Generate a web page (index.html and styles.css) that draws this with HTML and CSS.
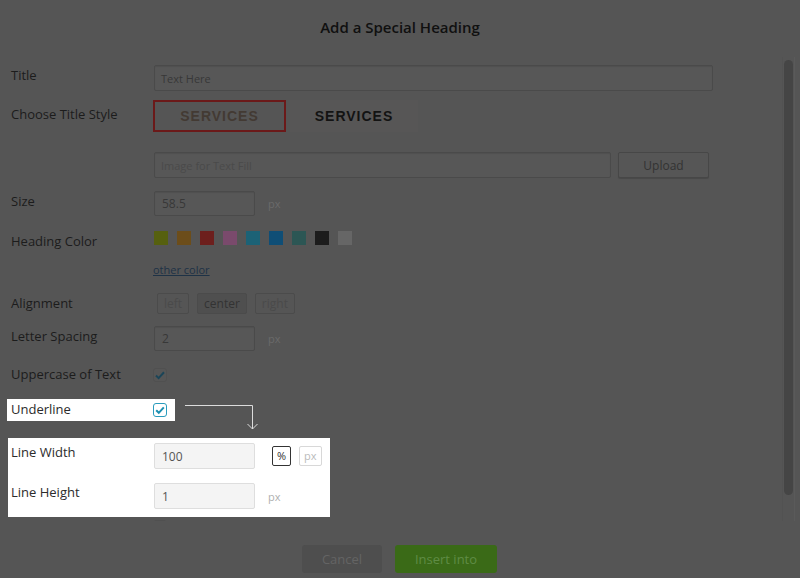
FILE: index.html
```html
<!DOCTYPE html>
<html>
<head>
<meta charset="utf-8">
<link rel="stylesheet" href="styles.css">
</head>
<body>
<div class="dialog">
  <div class="header"><h1 class="title">Add a Special Heading</h1></div>
  <div class="body">
    <div class="row r-title">
      <div class="label up">Title</div>
      <div class="input wide">Text Here</div>
    </div>
    <div class="row r-style">
      <div class="label up1">Choose Title Style</div>
      <div class="style-box selected"><span class="svc fill">SERVICES</span></div>
      <div class="style-box plain"><span class="svc">SERVICES</span></div>
    </div>
    <div class="row r-image">
      <div class="label"></div>
      <div class="input image placeholder">Image for Text Fill</div>
      <div class="btn upload">Upload</div>
    </div>
    <div class="row r-size">
      <div class="label up">Size</div>
      <div class="input small">58.5</div>
      <span class="unit">px</span>
    </div>
    <div class="row r-color">
      <div class="label down">Heading Color</div>
      <div class="swatches">
        <span class="sw" style="background:#56600f"></span>
        <span class="sw" style="background:#6c4d1a"></span>
        <span class="sw" style="background:#6d1f1d"></span>
        <span class="sw" style="background:#7a4a6c"></span>
        <span class="sw" style="background:#1c6276"></span>
        <span class="sw" style="background:#0f4e76"></span>
        <span class="sw" style="background:#2c5654"></span>
        <span class="sw" style="background:#1c1c1c"></span>
        <span class="sw" style="background:#666666"></span>
      </div>
    </div>
    <div class="row r-other">
      <div class="label"></div>
      <a class="link">other color</a>
    </div>
    <div class="row r-align">
      <div class="label up2">Alignment</div>
      <div class="aligns">
        <span class="abtn">left</span>
        <span class="abtn active">center</span>
        <span class="abtn">right</span>
      </div>
    </div>
    <div class="row r-letter">
      <div class="label up">Letter Spacing</div>
      <div class="input small">2</div>
      <span class="unit">px</span>
    </div>
    <div class="row r-upper">
      <div class="label up2">Uppercase of Text</div>
      <span class="check dim">
        <svg width="14" height="14" viewBox="0 0 14 14"><path d="M3 7.5l2.6 2.6L11 4.2" fill="none" stroke="#1b4558" stroke-width="2"/></svg>
      </span>
    </div>
    <div class="row r-under hl">
      <div class="label up2">Underline</div>
      <span class="check on">
        <svg width="14" height="14" viewBox="0 0 14 14"><path d="M3.2 7.2l2.6 2.6L10.8 4.3" fill="none" stroke="#1c8fb1" stroke-width="2"/></svg>
      </span>
    </div>
    <div class="group hl">
      <div class="row r-lw">
        <div class="label upx">Line Width</div>
        <div class="input small light">100</div>
        <span class="ubtn sel">%</span>
        <span class="ubtn">px</span>
      </div>
      <div class="row r-lh">
        <div class="label upx">Line Height</div>
        <div class="input small light">1</div>
        <span class="unit light">px</span>
      </div>
    </div>
    <div class="row r-hidden">
      <div class="label">Drop Shadow</div>
      <span class="check dim"></span>
    </div>
  </div>
  <div class="footer">
    <span class="fbtn cancel">Cancel</span>
    <span class="fbtn insert">Insert into</span>
  </div>
  <div class="scroll-track"><div class="scroll-thumb"></div></div>
  <svg class="arrow" width="80" height="36" viewBox="0 0 80 36">
    <path d="M0 5.5H67.5V29" fill="none" stroke="#dcdcdc" stroke-width="1"/>
    <path d="M62.5 24l5 5 5-5" fill="none" stroke="#dcdcdc" stroke-width="1"/>
  </svg>
</div>
</body>
</html>
```

FILE: styles.css
```css
* { box-sizing: border-box; }
html, body { margin: 0; padding: 0; }
body {
  background: #555555;
  font-family: "Open Sans", "DejaVu Sans", sans-serif;
  color: #1c1c1c;
}
.dialog {
  position: relative;
  width: 800px;
  height: 578px;
  overflow: hidden;
}
.header {
  height: 55px;
  padding-bottom: 2px;
  display: flex;
  align-items: center;
  justify-content: center;
}
.title {
  margin: 0;
  font-size: 15px;
  font-weight: 600;
  color: #101010;
}
.body {
  height: 466px;
  overflow: hidden;
  padding: 10px 0 0 11px;
}
.row {
  display: flex;
  align-items: center;
}
.label {
  width: 143px;
  flex: none;
  font-size: 13px;
  line-height: 18px;
  color: #1c1c1c;
}
.label.up { margin-top: -6px; }
.label.up1 { margin-top: -4px; }
.label.up2 { margin-top: -2px; }
.label.upx { margin-top: -8px; }
.label.down { margin-top: 5px; }

.r-title { height: 26px; margin-bottom: 9px; }
.r-style { height: 32px; margin-bottom: 20px; }
.r-image { height: 26px; margin-bottom: 13px; }
.r-size { height: 25px; margin-bottom: 15px; }
.r-color { height: 14px; margin-bottom: 17px; }
.r-other { height: 14px; margin-bottom: 17px; }
.r-align { height: 21px; margin-bottom: 12px; }
.r-letter { height: 25px; margin-bottom: 17px; }
.r-upper { height: 14px; margin-bottom: 17px; }
.r-under { height: 22px; margin-bottom: 17px; }
.r-hidden { height: 18px; margin-top: 1px; }

.input {
  height: 100%;
  border: 1px solid #4a4a4a;
  background: #575757;
  border-radius: 2px;
  font-size: 11px;
  color: #383838;
  padding-left: 6px;
  display: flex;
  align-items: center;
  box-shadow: inset 0 1px 1px rgba(0,0,0,0.08);
}
.input.wide { width: 559px; }
.input.image { width: 457px; }
.input.small { width: 101px; font-size: 12px; padding-left: 7px; }
.placeholder { color: #4a4a4a; }
.btn.upload {
  margin-left: 7px;
  width: 91px;
  height: 26px;
  border: 1px solid #474747;
  border-radius: 2px;
  background: #565656;
  font-size: 12px;
  color: #333;
  display: flex;
  align-items: center;
  justify-content: center;
  box-shadow: 0 1px 1px rgba(0,0,0,0.15);
}
.unit {
  margin-left: 13px;
  font-size: 11px;
  color: #6a6a6a;
}

.style-box {
  height: 32px;
  display: flex;
  align-items: center;
  justify-content: center;
}
.style-box.selected {
  width: 133px;
  margin-left: -1px;
  border: 2px solid #6b1919;
}
.style-box.plain {
  width: 128px;
  margin-left: 4px;
  background: #575656;
}
.svc {
  font-family: "Liberation Sans", Arial, sans-serif;
  font-weight: bold;
  font-size: 14px;
  letter-spacing: 1px;
  color: #131313;
}
.svc.fill { color: #433a33; }

.swatches { display: flex; gap: 9px; }
.sw { width: 14px; height: 14px; display: block; }

.link {
  margin-left: -1px;
  font-size: 11px;
  color: #1e3246;
  text-decoration: underline;
}

.aligns { display: flex; gap: 8px; margin-left: 3px; }
.abtn {
  height: 21px;
  padding: 0 6px;
  border: 1px solid #4b4b4b;
  border-radius: 2px;
  font-size: 12px;
  line-height: 19px;
  color: #4a4a4a;
}
.abtn.active { background: #4f4f4f; color: #333; }

.check {
  width: 14px;
  height: 14px;
  display: block;
  margin-left: -1px;
  border-radius: 3px;
}
.check svg { display: block; }
.check.dim { border: 1px solid #505050; background: #565656; }
.check.dim svg { margin: -1px; }
.check.on { border: 1.5px solid #2a9cbd; background: #fff; }
.check.on svg { margin: -1.5px; }

.hl { background: #fff; }
.hl .label { color: #2b2b2b; }
.r-under {
  width: 168px;
  margin-left: -4px;
  padding-left: 4px;
}
.group {
  width: 322px;
  height: 79px;
  margin-left: -3px;
  padding: 5px 0 0 3px;
  margin-bottom: 0;
}
.r-lw { height: 26px; margin-bottom: 14px; }
.r-lh { height: 26px; }
.input.light {
  background: #f4f4f4;
  border-color: #dedede;
  color: #555;
  box-shadow: none;
}
.unit.light { color: #b0b0b0; }
.ubtn {
  height: 20px;
  border: 1px solid #d8d8d8;
  border-radius: 2px;
  font-size: 11px;
  line-height: 18px;
  padding: 0 4px;
  color: #bbb;
  margin-left: 8px;
}
.ubtn.sel {
  margin-left: 17px;
  border-color: #333;
  color: #333;
}

.footer {
  height: 57px;
  padding-top: 24px;
  display: flex;
  justify-content: center;
  gap: 13px;
  padding-right: 1px;
}
.fbtn {
  height: 28px;
  border-radius: 3px;
  font-size: 13px;
  display: flex;
  align-items: center;
  justify-content: center;
}
.cancel { width: 80px; background: #4e4e4e; color: #646464; }
.insert { width: 102px; background: #3a6a17; color: #5f8c45; }

.scroll-track {
  position: absolute;
  left: 782px;
  top: 57px;
  width: 13px;
  height: 464px;
  border-left: 1px solid #525252;
  border-right: 1px solid #5a5a5a;
  padding: 3px 0 0 1px;
}
.scroll-thumb {
  width: 9px;
  height: 435px;
  border-radius: 5px;
  background: #454545;
}
.arrow {
  position: absolute;
  left: 185px;
  top: 400px;
}
```
